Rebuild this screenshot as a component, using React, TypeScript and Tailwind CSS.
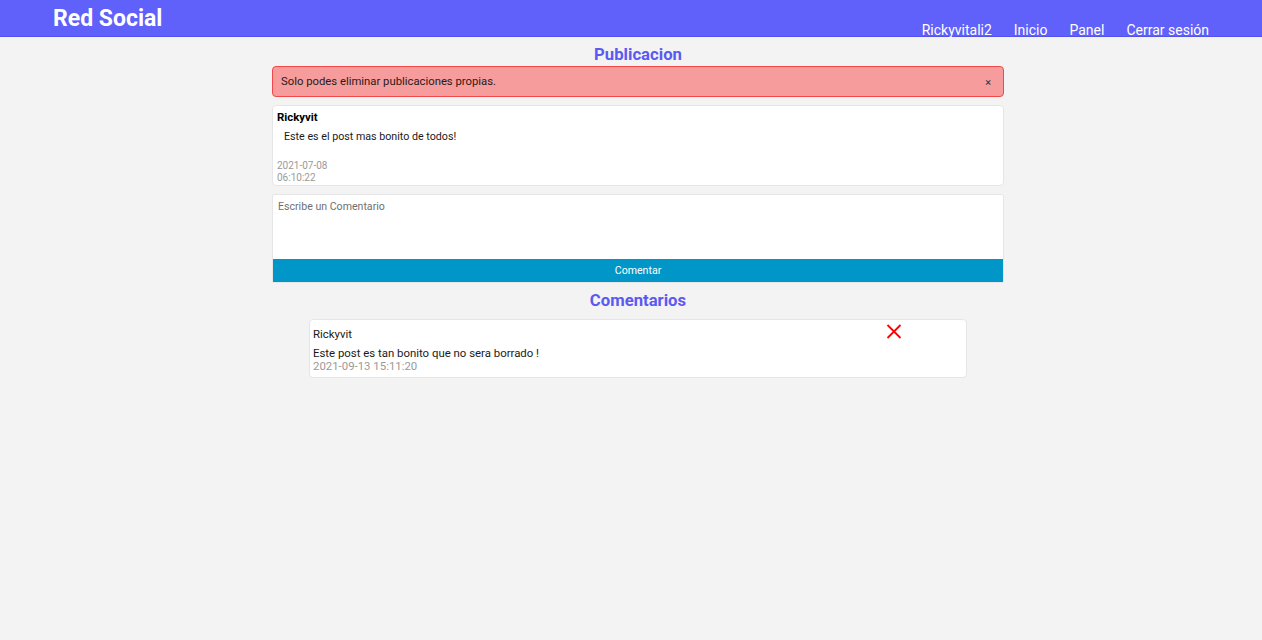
import React from 'react';

const Header: React.FC = () => (
  <header className="h-[37px] bg-[#6060fa] border-b border-[#5252ec] flex items-stretch justify-between pl-[53px] pr-[53px] text-white">
    <div className="text-[23px] font-bold leading-[36px] pt-[1px]">Red Social</div>
    <nav className="flex items-end gap-[22px] text-[14px] leading-[12px] pl-[2px]">
      <a className="cursor-pointer">Rickyvitali2</a>
      <a className="cursor-pointer">Inicio</a>
      <a className="cursor-pointer">Panel</a>
      <a className="cursor-pointer">Cerrar sesión</a>
    </nav>
  </header>
);

const CommentCard: React.FC<{ user: string; text: string; date: string }> = ({ user, text, date }) => (
  <div className="w-[658px] bg-white border border-[#e6e6e6] rounded-[4px] pl-[3px] pt-[7px] pb-[5px] text-[11.4px] text-[#1a1a1a]">
    <div className="flex justify-between">
      <div className="leading-[14px]">{user}</div>
      <button className="mr-[64px] -mt-[3px] self-start" title="Eliminar">
        <svg width="16" height="15" viewBox="0 0 16 15" className="block">
          <path d="M1.5 1 L14.5 14 M14.5 1 L1.5 14" stroke="#ff0000" strokeWidth="1.8" fill="none" />
        </svg>
      </button>
    </div>
    <div className="leading-[14px] mt-[5px]">{text}</div>
    <div className="leading-[12px] text-[#9a9a9a]">{date}</div>
  </div>
);

export default function App() {
  return (
    <div className="min-h-[640px] bg-[#f3f3f3] font-['Roboto',sans-serif]">
      <Header />
      <div className="flex justify-center pl-[14px]">
        <div className="w-[732px] flex flex-col items-center">
          <h2 className="pt-[7px] leading-[22px] text-[16.7px] font-bold text-[#5a5af2]">Publicacion</h2>

          <div className="w-full h-[31px] flex items-center justify-between bg-[#f69c9c] border border-[#f24848] rounded-[4px] pl-[8px] pr-[12px] pt-[2px] text-[11.3px] text-[#2a1a1a]">
            <span>Solo podes eliminar publicaciones propias.</span>
            <button className="text-[11px] leading-none text-[#333]">×</button>
          </div>

          <div className="w-full mt-[8px] h-[81px] bg-white border border-[#e6e6e6] rounded-[4px] pl-[4px] pt-[3px]">
            <div className="text-[11.4px] font-bold leading-[16px] text-black">Rickyvit</div>
            <p className="text-[10.7px] leading-[16px] pl-[7px] mt-[4px] text-[#1a1a1a]">Este es el post mas bonito de todos!</p>
            <div className="mt-[15px] text-[10px] leading-[12px] text-[#9a9a9a]">
              <div>2021-07-08</div>
              <div>06:10:22</div>
            </div>
          </div>

          <form className="w-full mt-[8px] flex flex-col border border-[#e6e6e6] rounded-[2px] bg-white">
            <textarea
              placeholder="Escribe un Comentario"
              className="h-[64px] resize-none px-[5px] pt-[5px] text-[10.6px] leading-[14px] outline-none placeholder:text-[#6f6f6f]"
            />
            <button type="button" className="h-[23px] bg-[#0096c8] text-white text-[10.6px]">Comentar</button>
          </form>

          <h2 className="pt-[7px] leading-[22px] text-[16.7px] font-bold text-[#5a5af2]">Comentarios</h2>

          <div className="mt-[7px]">
            <CommentCard
              user="Rickyvit"
              text="Este post es tan bonito que no sera borrado !"
              date="2021-09-13 15:11:20"
            />
          </div>
        </div>
      </div>
    </div>
  );
}
